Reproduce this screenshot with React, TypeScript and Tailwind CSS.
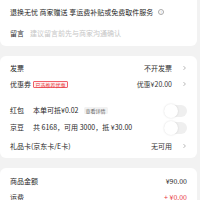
import React from "react";

const Chevron = () => (
  <svg width="5" height="6" viewBox="0 0 5 6" className="ml-[10px]">
    <path d="M1.8 1.4 L3.4 3 L1.8 4.6" fill="none" stroke="#a6a6a6" strokeWidth="0.8" strokeLinecap="round" strokeLinejoin="round" />
  </svg>
);

const Toggle = () => (
  <div className="relative w-[23px] h-[12px] rounded-full bg-[#efefef]">
    <div className="absolute left-0 top-[-1px] w-[14px] h-[14px] rounded-full bg-white shadow-[0_0_2px_rgba(0,0,0,0.14)]" />
  </div>
);

export default function App() {
  return (
    <div
      className="relative w-[200px] h-[200px] overflow-hidden bg-[#f2f2f2] text-[7px] text-[#262626]"
      style={{ fontFamily: '"Noto Sans CJK SC", "Noto Sans", sans-serif' }}
    >
      {/* card 1 */}
      <div className="bg-white rounded-b-[6px] mr-[3px] pl-[10px] pr-[10px] pb-[4px]">
        <div className="h-[24px] flex items-center">
          <span className="whitespace-nowrap leading-none">退换无忧 商家赠送 享运费补贴或免费取件服务</span>
          <span className="ml-[5px] w-[6px] h-[6px] rounded-full border-[0.6px] border-[#aaa] flex items-center justify-center text-[4px] text-[#aaa] leading-none">!</span>
        </div>
        <div className="h-[18px] flex items-center">
          <span className="text-[#333] leading-none">留言</span>
          <span className="ml-[6px] text-[#c6c6c6] leading-none whitespace-nowrap">建议留言前先与商家沟通确认</span>
        </div>
      </div>

      {/* card 2 */}
      <div className="mt-[10px] mr-[3px] bg-white rounded-[6px] pl-[10px] pr-[10px] pt-[4px] pb-[2px]">
        <div className="h-[16px] flex items-center">
          <span className="leading-none">发票</span>
          <span className="ml-auto leading-none text-[#333]">不开发票</span>
          <Chevron />
        </div>
        <div className="h-[16px] flex items-center">
          <span className="leading-none w-[23px]">优惠券</span>
          <span className="h-[7px] px-[1.5px] flex items-center border-[0.5px] border-[#f0606a] bg-[#fff1f1] text-[#e8363c] text-[5px] leading-none rounded-[1px]">已选推荐优惠</span>
          <span className="ml-auto leading-none text-[#333]">优惠¥20.00</span>
          <Chevron />
        </div>
        <div className="mt-[10px] h-[17px] flex items-center">
          <span className="leading-none w-[23px]">红包</span>
          <span className="leading-none">本单可抵¥0.02</span>
          <span className="ml-[5px] h-[7px] px-[2px] flex items-center bg-[#f2f2f2] text-[#666] text-[5px] leading-none rounded-[1.5px]">查看详情</span>
          <div className="ml-auto">
            <Toggle />
          </div>
        </div>
        <div className="h-[17px] flex items-center">
          <span className="leading-none w-[23px]">京豆</span>
          <span className="leading-none whitespace-nowrap">共 6168，可用 3000，抵 ¥30.00</span>
          <div className="ml-auto">
            <Toggle />
          </div>
        </div>
        <div className="h-[20px] flex items-center">
          <span className="leading-none">礼品卡(京东卡/E卡)</span>
          <span className="ml-auto leading-none text-[#333]">无可用</span>
          <Chevron />
        </div>
      </div>

      {/* card 3 */}
      <div className="mt-[10px] mr-[3px] bg-white rounded-[6px] pl-[10px] pr-[10px] pt-[5px]">
        <div className="h-[16px] flex items-center">
          <span className="leading-none">商品金额</span>
          <span className="ml-auto leading-none">¥90.00</span>
        </div>
        <div className="h-[16px] flex items-center">
          <span className="leading-none">运费</span>
          <span className="ml-auto leading-none text-[#e8363c]">+ ¥0.00</span>
        </div>
      </div>
    </div>
  );
}
